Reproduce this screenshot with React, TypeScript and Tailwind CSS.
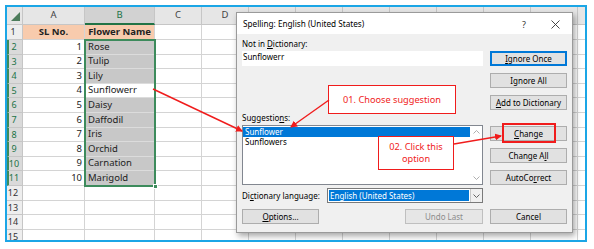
import React from "react";

const LETTERS = ["A", "B", "C", "D", "E", "F", "G", "H", "I", "J", "K", "L"];
const COL_W = [
  "w-[62px]",
  "w-[70px]",
  "w-[47px]",
  "w-[47px]",
  "w-[47px]",
  "w-[47px]",
  "w-[47px]",
  "w-[47px]",
  "w-[47px]",
  "w-[47px]",
  "w-[47px]",
  "w-[47px]",
];

// columns E onwards sit behind the dialog, their letters are never seen
const VISIBLE_LETTERS = 4;

const FLOWERS = [
  "Rose",
  "Tulip",
  "Lily",
  "Sunflowerr",
  "Daisy",
  "Daffodil",
  "Iris",
  "Orchid",
  "Carnation",
  "Marigold",
];

function HeaderRow() {
  return (
    <div className="flex h-[18px]">
      <div className="flex w-[16px] shrink-0 items-end justify-end border-b border-r border-[#c6c6c6] bg-[#e6e6e6] pb-[3px] pr-[2px]">
        <svg width="9" height="9" viewBox="0 0 9 9">
          <path d="M9 0 L9 9 L0 9 Z" fill="#4d7c5b" />
        </svg>
      </div>
      {LETTERS.map((l, i) => (
        <div
          key={l}
          className={`${COL_W[i]} flex shrink-0 items-center justify-center border-r border-r-[#c6c6c6] ${
            l === "B"
              ? "border-b-2 border-b-[#217346] bg-[#d2d2d2] text-[#217346]"
              : "border-b border-b-[#c6c6c6] bg-[#e6e6e6] text-[#444]"
          }`}
        >
          {i < VISIBLE_LETTERS ? l : ""}
        </div>
      ))}
    </div>
  );
}

function DataRow({ r }: { r: number }) {
  const selected = r >= 2 && r <= 11;
  const isTitle = r === 1;
  return (
    <div className={`flex ${isTitle ? "h-[15px]" : "h-[14.6px]"}`}>
      <div
        className={`flex w-[16px] shrink-0 items-center justify-center border-b border-r border-[#c6c6c6] pr-[3px] text-[9px] ${
          selected
            ? "border-l-2 border-l-[#3d8b5c] bg-[#dadada] text-[#217346]"
            : "bg-[#eeeeee] text-[#333]"
        }`}
      >
        {r}
      </div>
      {/* column A */}
      <div
        className={`${COL_W[0]} flex shrink-0 items-center border-b border-r border-[#d4d4d4] ${
          isTitle ? "justify-center bg-[#f8cbad] font-bold" : "justify-end pr-[2px]"
        }`}
      >
        {isTitle ? "SL No." : selected ? r - 1 : ""}
      </div>
      {/* column B */}
      <div
        className={`${COL_W[1]} flex shrink-0 items-center border-b border-r ${
          isTitle
            ? "justify-center border-[#d4d4d4] bg-[#f8cbad] font-bold"
            : selected
            ? r === 5
              ? "border-[#dcdcdc] bg-white pl-[3px]"
              : "border-[#dcdcdc] bg-[#c8c8c8] pl-[3px]"
            : "border-[#d4d4d4]"
        }`}
      >
        {isTitle ? "Flower Name" : selected ? FLOWERS[r - 2] : ""}
      </div>
      {LETTERS.slice(2).map((l, i) => (
        <div key={l} className={`${COL_W[i + 2]} shrink-0 border-b border-r border-[#d4d4d4]`} />
      ))}
    </div>
  );
}

function Btn({
  children,
  className = "",
}: {
  children: React.ReactNode;
  className?: string;
}) {
  return (
    <button
      type="button"
      className={`flex h-[15px] w-[77px] items-center justify-center border bg-[#e1e1e1] text-[8px] leading-none ${className}`}
    >
      {children}
    </button>
  );
}

function SpellingDialog() {
  return (
    <div className="absolute left-[229px] top-[5px] flex h-[221px] w-[337px] flex-col border border-[#9a9a9a] bg-[#f0f0f0] text-[8px] text-black shadow-[2px_3px_6px_rgba(0,0,0,0.35)] [font-family:'Noto_Sans',sans-serif]">
      <div className="flex h-[21px] shrink-0 items-center bg-white pl-[6px] pt-[2px]">
        <span className="text-[8.2px]">Spelling: English (United States)</span>
        <span className="ml-auto text-[9px] text-[#333]">?</span>
        <svg className="ml-[25px] mr-[12px]" width="9" height="9" viewBox="0 0 9 9">
          <path d="M0.5 0.5 L8.5 8.5 M8.5 0.5 L0.5 8.5" stroke="#333" strokeWidth="0.9" />
        </svg>
      </div>
      <div className="flex flex-1 pl-[5px] pr-[5px]">
        <div className="flex w-[241px] flex-col">
          <div className="mt-[5px] h-[10px] leading-[10px]">
            Not in <u>D</u>ictionary:
          </div>
          <div className="mt-[2px] h-[15px] bg-white pl-[1px] leading-[11px]">Sunflowerr</div>
          <div className="mt-[47px] h-[10px] leading-[10px]">
            Suggestio<u>n</u>s:
          </div>
          <div className="mt-[2px] flex h-[60px] border border-[#828790] bg-white">
            <div className="flex flex-1 flex-col pt-[1px]">
              <div className="h-[10px] bg-[#0078d7] pl-[2px] leading-[10px] text-white">Sunflower</div>
              <div className="h-[10px] pl-[2px] leading-[10px]">Sunflowers</div>
            </div>
            <div className="flex w-[12px] flex-col items-center justify-between py-[4px]">
              <svg width="7" height="4" viewBox="0 0 7 4">
                <path d="M0.5 3.5 L3.5 0.5 L6.5 3.5" fill="none" stroke="#a6a6a6" strokeWidth="0.9" />
              </svg>
              <svg width="7" height="4" viewBox="0 0 7 4">
                <path d="M0.5 0.5 L3.5 3.5 L6.5 0.5" fill="none" stroke="#a6a6a6" strokeWidth="0.9" />
              </svg>
            </div>
          </div>
          <div className="mt-[3px] flex h-[15px] items-center">
            <span>
              Di<u>c</u>tionary language:
            </span>
            <div className="ml-auto flex h-[15px] w-[156px] border border-[#7a7a7a] bg-white">
              <div className="m-[1px] flex flex-1 items-center bg-[#0078d7] pl-[1px] text-white">
                English (United States)
              </div>
              <div className="flex w-[12px] items-center justify-center border-l border-[#c8c8c8] bg-[#f0f0f0]">
                <svg width="7" height="4" viewBox="0 0 7 4">
                  <path d="M0.5 0.5 L3.5 3.5 L6.5 0.5" fill="none" stroke="#555" strokeWidth="0.9" />
                </svg>
              </div>
            </div>
          </div>
          <div className="mt-[6px] flex justify-between">
            <Btn className="border-[#adadad]">
              <span>
                <u>O</u>ptions...
              </span>
            </Btn>
            <Btn className="w-[78px] border-[#bfbfbf] bg-[#e6e6e6] text-[#8c8c8c]">Undo Last</Btn>
          </div>
        </div>
        <div className="ml-[7px] flex w-[77px] flex-col">
          <Btn className="mt-[17px] border-[#0078d7] shadow-[inset_0_0_0_1px_#0078d7]">
            <span>
              <u>I</u>gnore Once
            </span>
          </Btn>
          <Btn className="mt-[7px] border-[#adadad]">
            <span>
              I<u>g</u>nore All
            </span>
          </Btn>
          <Btn className="mt-[7px] border-[#adadad]">
            <span>
              <u>A</u>dd to Dictionary
            </span>
          </Btn>
          <Btn className="mt-[16px] border-[#adadad]">
            <span>
              <u>C</u>hange
            </span>
          </Btn>
          <Btn className="mt-[7px] border-[#adadad]">
            <span>
              Change A<u>l</u>l
            </span>
          </Btn>
          <Btn className="mt-[7px] border-[#adadad]">
            <span>
              AutoCo<u>r</u>rect
            </span>
          </Btn>
          <Btn className="mt-[24px] border-[#adadad]">Cancel</Btn>
        </div>
      </div>
    </div>
  );
}

export default function App() {
  return (
    <div className="relative h-[249px] w-[594px] overflow-hidden bg-white pl-[5px] pt-[5px]">
      <div className="relative h-[237px] w-[582px] overflow-hidden border-2 border-[#1ba6e6] text-[9.5px] text-[#222] [font-family:'Noto_Sans',sans-serif]">
        <HeaderRow />
        {Array.from({ length: 15 }, (_, i) => (
          <DataRow key={i} r={i + 1} />
        ))}

        {/* selection outline B2:B11 */}
        <div className="pointer-events-none absolute left-[77px] top-[32px] h-[148px] w-[72px] border-2 border-[#3d8b5c]">
          <div className="absolute -bottom-[4px] -right-[4px] h-[5px] w-[5px] border border-white bg-[#3d8b5c]" />
        </div>

        <SpellingDialog />

        {/* callouts */}
        <div className="absolute left-[321px] top-[78px] flex h-[29px] w-[128px] items-center justify-center border border-[#f01c1c] bg-white text-[9.2px] text-[#f01c1c]">
          01. Choose suggestion
        </div>
        <div className="absolute left-[371px] top-[129px] flex h-[34px] w-[76px] flex-col items-center justify-center border border-[#f01c1c] bg-white text-[9.2px] leading-[12px] text-[#f01c1c]">
          <span>02. Click this</span>
          <span>option</span>
        </div>
        <div className="absolute left-[495px] top-[116px] h-[20px] w-[54px] border-2 border-[#f01c1c]" />
      </div>

      <svg className="pointer-events-none absolute left-0 top-0" width="594" height="249">
        <defs>
          <marker
            id="ah"
            markerWidth="7"
            markerHeight="7"
            refX="6"
            refY="3.5"
            orient="auto"
            markerUnits="userSpaceOnUse"
          >
            <path d="M0 0 L7 3.5 L0 7 Z" fill="#f01c1c" />
          </marker>
        </defs>
        <line x1="153" y1="89" x2="242" y2="131" stroke="#f01c1c" strokeWidth="1.4" markerEnd="url(#ah)" />
        <line x1="329" y1="100" x2="291" y2="127" stroke="#f01c1c" strokeWidth="1.4" markerEnd="url(#ah)" />
        <line x1="454" y1="144" x2="501" y2="136" stroke="#f01c1c" strokeWidth="1.4" markerEnd="url(#ah)" />
      </svg>
    </div>
  );
}
